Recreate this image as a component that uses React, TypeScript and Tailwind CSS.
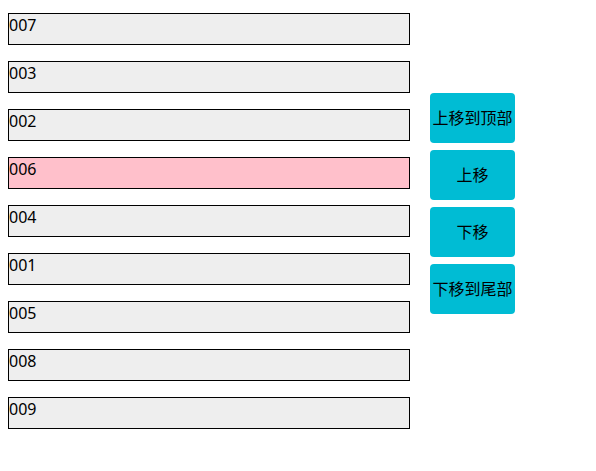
import React, { useState } from 'react';

const initial = ['007', '003', '002', '006', '004', '001', '005', '008', '009'];

export default function App() {
  const [items, setItems] = useState(initial);
  const [selected, setSelected] = useState('006');

  const move = (kind: 'top' | 'up' | 'down' | 'bottom') => {
    const i = items.indexOf(selected);
    if (i < 0) return;
    const next = [...items];
    next.splice(i, 1);
    if (kind === 'top') next.unshift(selected);
    else if (kind === 'bottom') next.push(selected);
    else if (kind === 'up') next.splice(Math.max(0, i - 1), 0, selected);
    else next.splice(Math.min(next.length, i + 1), 0, selected);
    setItems(next);
  };

  const buttons: [string, 'top' | 'up' | 'down' | 'bottom'][] = [
    ['上移到顶部', 'top'],
    ['上移', 'up'],
    ['下移', 'down'],
    ['下移到尾部', 'bottom'],
  ];

  return (
    <div className="flex items-start pl-2 pt-[13px] text-base text-black font-['Noto_Sans','Noto_Sans_CJK_SC',sans-serif]">
      <div className="flex flex-col gap-4">
        {items.map((id) => (
          <div
            key={id}
            onClick={() => setSelected(id)}
            className={`w-[402px] h-8 border border-black leading-[30px] cursor-pointer ${
              id === selected ? 'bg-[#ffc0cb]' : 'bg-[#eeeeee]'
            }`}
          >
            <span className="relative -top-[4px]">{id}</span>
          </div>
        ))}
      </div>
      <div className="flex flex-col gap-[7px] ml-[20px] mt-[80px]">
        {buttons.map(([label, kind]) => (
          <button
            key={kind}
            onClick={() => move(kind)}
            className="w-[85px] h-[50px] rounded bg-[#00bcd4] text-black text-base whitespace-nowrap"
          >
            {label}
          </button>
        ))}
      </div>
    </div>
  );
}
